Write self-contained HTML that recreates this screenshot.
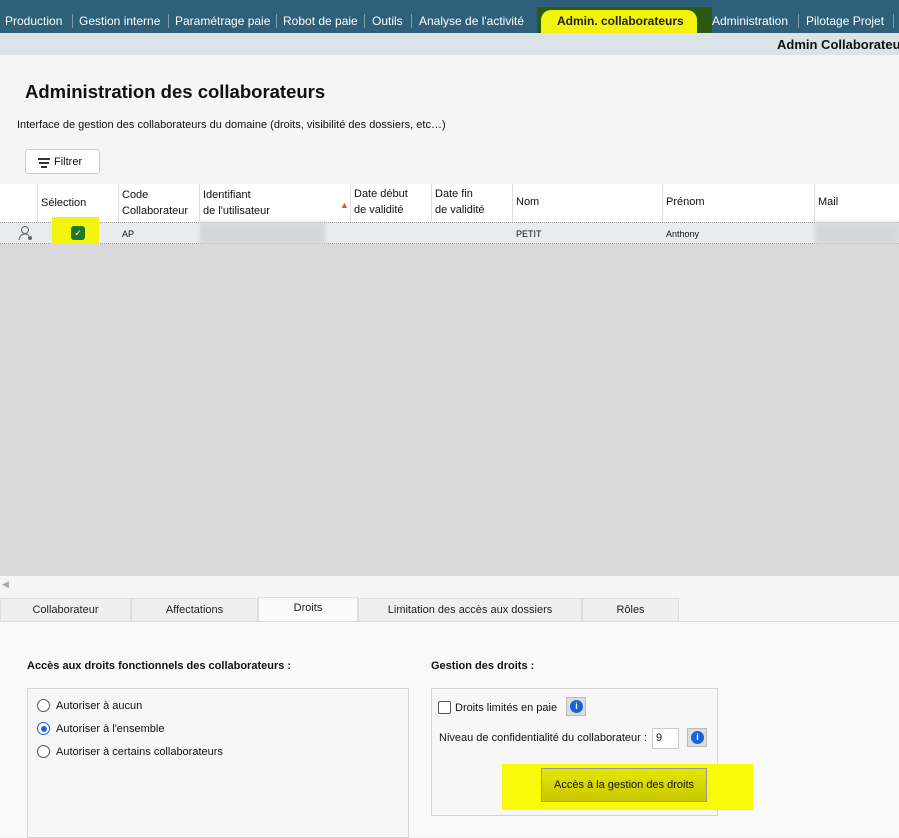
<!DOCTYPE html>
<html><head><meta charset="utf-8"><style>
*{box-sizing:border-box;margin:0;padding:0}
body{width:899px;height:835px;overflow:hidden;font-family:"Liberation Sans",sans-serif;background:#f5f5f5;position:relative;font-size:12px;color:#111}
.a{position:absolute}
.nav{left:0;top:0;width:899px;height:33px;background:#2e6079}
.nav span{position:absolute;top:14px;color:#fff;font-size:12px;white-space:nowrap}
.sep{position:absolute;top:14px;width:1px;height:14px;background:#7d9aab}
.sub{left:0;top:33px;width:899px;height:22px;background:#dce3e8}
.hdr div{position:absolute;font-size:11px;line-height:16px;color:#111}
.vl{position:absolute;width:1px;background:#ddd}
.tab{position:absolute;top:598px;height:23px;background:#efefef;border:1px solid #ddd;border-bottom:none;text-align:center;font-size:11px;line-height:22px;color:#222}
.box{position:absolute;border:1px solid #d4d4d4;background:#f7f7f7}
.radio{position:absolute;width:13px;height:13px;border:1px solid #555;border-radius:50%;background:#fff}
.info{position:absolute;width:20px;height:19px;background:#ddd;border:1px solid #bbb}
.info i{position:absolute;left:3px;top:2px;width:13px;height:13px;border-radius:50%;background:#1565d8;color:#fff;font-style:normal;font-size:9px;font-weight:bold;text-align:center;line-height:13px}
</style></head><body>
<div class="a nav">
<span style="left:5px">Production</span><div class="sep" style="left:72px"></div>
<span style="left:79px">Gestion interne</span><div class="sep" style="left:168px"></div>
<span style="left:175px">Paramétrage paie</span><div class="sep" style="left:276px"></div>
<span style="left:283px">Robot de paie</span><div class="sep" style="left:364px"></div>
<span style="left:372px">Outils</span><div class="sep" style="left:411px"></div>
<span style="left:419px">Analyse de l'activité</span>
<div class="a" style="left:537px;top:7px;width:175px;height:26px;background:#2b5a10"></div>
<div class="a" style="left:541px;top:10px;width:156px;height:23px;background:#f4f40a;border-radius:10px 10px 0 0"></div>
<span style="left:557px;color:#222;font-weight:bold;font-size:12px">Admin. collaborateurs</span>
<span style="left:712px">Administration</span><div class="sep" style="left:798px"></div>
<span style="left:806px">Pilotage Projet</span><div class="sep" style="left:893px"></div>
</div>
<div class="a sub"><span class="a" style="left:777px;top:4px;font-weight:bold;font-size:13px;white-space:nowrap">Admin Collaborateurs</span></div>
<div class="a" style="left:25px;top:81px;font-size:18.5px;font-weight:bold">Administration des collaborateurs</div>
<div class="a" style="left:17px;top:119px;font-size:11px">Interface de gestion des collaborateurs du domaine (droits, visibilité des dossiers, etc…)</div>
<div class="a" style="left:25px;top:149px;width:75px;height:25px;border:1px solid #ccc;background:#fff;border-radius:3px;font-size:11px;line-height:24px;padding-left:28px">Filtrer
<div class="a" style="left:12px;top:8px;width:12px;height:1.5px;background:#333"></div><div class="a" style="left:13px;top:12px;width:10px;height:1.5px;background:#333"></div><div class="a" style="left:15px;top:16px;width:6px;height:1.5px;background:#333"></div></div>
<div class="a" style="left:0;top:184px;width:899px;height:38px;background:#fff"></div>
<div class="a hdr" style="left:0;top:184px;width:899px;height:38px">
<div style="left:41px;top:11px">Sélection</div>
<div style="left:122px;top:3px">Code<br>Collaborateur</div>
<div style="left:203px;top:3px">Identifiant<br>de l'utilisateur</div>
<div style="left:340px;top:13px;color:#e8541a;font-size:9px">▲</div>
<div style="left:354px;top:2px">Date début<br>de validité</div>
<div style="left:435px;top:2px">Date fin<br>de validité</div>
<div style="left:516px;top:10px">Nom</div>
<div style="left:666px;top:10px">Prénom</div>
<div style="left:818px;top:10px">Mail</div>
</div>
<div class="vl" style="left:37px;top:184px;height:59px"></div><div class="vl" style="left:118px;top:184px;height:59px"></div><div class="vl" style="left:199px;top:184px;height:59px"></div><div class="vl" style="left:350px;top:184px;height:59px"></div><div class="vl" style="left:431px;top:184px;height:59px"></div><div class="vl" style="left:512px;top:184px;height:59px"></div><div class="vl" style="left:662px;top:184px;height:59px"></div><div class="vl" style="left:814px;top:184px;height:59px"></div>
<div class="a" style="left:0;top:222px;width:899px;height:22px;background:#e8ecee;border-top:1px dotted #999;border-bottom:1px dotted #999"></div>
<div class="a" style="left:52px;top:217px;width:47px;height:28px;background:#f4f40a"></div>
<div class="a" style="left:71px;top:226px;width:14px;height:14px;background:#1e7a22;border-radius:3px;color:#fff;font-size:9px;text-align:center;line-height:14px">✓</div>
<svg class="a" style="left:18px;top:225px" width="16" height="16"><circle cx="7" cy="5" r="3.5" fill="none" stroke="#666"/><path d="M1 15 Q2 9 7 9 Q10 9 11 11" fill="none" stroke="#666"/><circle cx="12" cy="13" r="2" fill="#666"/></svg>
<div class="a" style="left:122px;top:229px;font-size:9px">AP</div>
<div class="a" style="left:200px;top:222px;width:125px;height:23px;background:#d4d7d9;filter:blur(2px)"></div>
<div class="a" style="left:516px;top:229px;font-size:9px">PETIT</div>
<div class="a" style="left:666px;top:229px;font-size:9px">Anthony</div>
<div class="a" style="left:815px;top:222px;width:84px;height:23px;background:#d4d7d9;filter:blur(2px)"></div>
<div class="a" style="left:0;top:244px;width:899px;height:332px;background:#d9d9d9"></div>
<div class="a" style="left:2px;top:579px;color:#aaa;font-size:9px">◀</div>
<div class="tab" style="left:0;width:131px">Collaborateur</div>
<div class="tab" style="left:131px;width:127px">Affectations</div>
<div class="tab" style="left:258px;top:597px;width:100px;height:25px;background:#fafafa;line-height:20px">Droits</div>
<div class="tab" style="left:358px;width:224px">Limitation des accès aux dossiers</div>
<div class="tab" style="left:582px;width:97px">Rôles</div>
<div class="a" style="left:0;top:621px;width:899px;height:214px;background:#f9f9f9;border-top:1px solid #ddd"></div>
<div class="a" style="left:27px;top:660px;font-size:11px;font-weight:bold">Accès aux droits fonctionnels des collaborateurs :</div>
<div class="box" style="left:27px;top:688px;width:382px;height:150px"></div>
<div class="radio" style="left:37px;top:699px"></div><div class="a" style="left:56px;top:700px;font-size:11px">Autoriser à aucun</div>
<div class="radio" style="left:37px;top:722px;border-color:#1565d8"><div class="a" style="left:2.5px;top:2.5px;width:6px;height:6px;border-radius:50%;background:#1565d8"></div></div><div class="a" style="left:56px;top:723px;font-size:11px">Autoriser à l'ensemble</div>
<div class="radio" style="left:37px;top:745px"></div><div class="a" style="left:56px;top:746px;font-size:11px">Autoriser à certains collaborateurs</div>
<div class="a" style="left:431px;top:660px;font-size:11px;font-weight:bold">Gestion des droits :</div>
<div class="box" style="left:431px;top:688px;width:287px;height:128px"></div>
<div class="a" style="left:438px;top:701px;width:13px;height:13px;border:1px solid #555;border-radius:2px;background:#fff"></div>
<div class="a" style="left:455px;top:702px;font-size:11px">Droits limités en paie</div>
<div class="info" style="left:566px;top:697px"><i>i</i></div>
<div class="a" style="left:439px;top:732px;font-size:11px">Niveau de confidentialité du collaborateur :</div>
<div class="a" style="left:652px;top:728px;width:27px;height:21px;background:#fff;border:1px solid #ccc;font-size:11px;padding:3px 0 0 3px">9</div>
<div class="info" style="left:687px;top:728px"><i>i</i></div>
<div class="a" style="left:502px;top:764px;width:251px;height:46px;background:#f9f90a"></div>
<div class="a" style="left:541px;top:768px;width:166px;height:34px;background:linear-gradient(#e6e600,#c8c800);border:1px solid #999;font-size:11px;text-align:center;line-height:33px">Accès à la gestion des droits</div>
</body></html>
